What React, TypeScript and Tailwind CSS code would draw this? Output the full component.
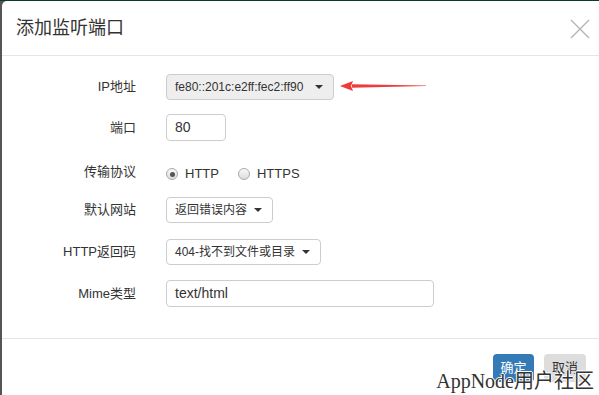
import type { ReactNode } from 'react';

const FONT = { fontFamily: '"Liberation Sans", "Noto Sans CJK SC", sans-serif' };

function Caret() {
  return (
    <span className="ml-auto inline-block h-0 w-0 shrink-0 border-x-[4px] border-t-[4px] border-x-transparent border-t-[#333]" />
  );
}

function Row({ label, mt, children }: { label: string; mt: string; children: ReactNode }) {
  return (
    <div className={`flex h-[27px] items-center ${mt}`}>
      <div className="w-[134px] shrink-0 text-right text-[13px] text-[#333]">{label}</div>
      <div className="ml-[30px] flex items-center">{children}</div>
    </div>
  );
}

function Select({ value, width, disabled }: { value: string; width: string; disabled?: boolean }) {
  return (
    <div
      className={`flex h-[26px] items-center whitespace-nowrap rounded-[4px] border border-[#ccc] pl-[8px] pr-[10px] text-[12px] text-[#333] ${width} ${
        disabled ? 'bg-[#eee]' : 'bg-white'
      }`}
    >
      <span>{value}</span>
      <Caret />
    </div>
  );
}

function Radio({ checked, label }: { checked?: boolean; label: string }) {
  return (
    <label className="flex items-center gap-[7px] text-[13px] text-[#333]">
      <span className="flex h-[12px] w-[12px] items-center justify-center rounded-full border border-[#aaa] bg-gradient-to-b from-[#fafafa] to-[#dcdcdc]">
        {checked && <span className="h-[5px] w-[5px] rounded-full bg-[#555]" />}
      </span>
      {label}
    </label>
  );
}

export default function App() {
  return (
    <div className="relative h-[395px] w-[599px] overflow-hidden border-t border-[#0b3b2b] bg-[#555]" style={FONT}>
      <div className="ml-[2px] flex h-[400px] w-[600px] flex-col rounded-tl-[5px] bg-white">
        {/* Header */}
        <div className="flex h-[55px] items-center justify-between border-b border-[#e5e5e5] pl-[14px] pr-[12px]">
          <h3 className="text-[18px] text-[#333]">添加监听端口</h3>
          <svg width="20" height="20" viewBox="0 0 20 20" className="mt-[1px]">
            <path d="M1 1 L19 19 M19 1 L1 19" stroke="#b5b5b5" strokeWidth="1.4" />
          </svg>
        </div>

        {/* Body */}
        <div className="h-[283px] border-b border-[#e5e5e5]">
          <Row label="IP地址" mt="mt-[17px]">
            <Select value="fe80::201c:e2ff:fec2:ff90" width="w-[168px]" disabled />
            <svg width="86" height="12" viewBox="0 0 86 12" className="ml-[6px] -mt-[2px]">
              <path d="M12 4.2 L86 5.6 L86 6 L12 7.8 Z" fill="#ee3b3b" />
              <path d="M0 6 L13 1 L11 6 L13 11 Z" fill="#ee3b3b" />
            </svg>
          </Row>
          <Row label="端口" mt="mt-[14px]">
            <div className="flex h-[27px] w-[60px] items-center rounded-[4px] border border-[#ccc] px-[8px] text-[14px] text-[#333]">
              80
            </div>
          </Row>
          <Row label="传输协议" mt="mt-[17px]">
            <div className="mt-[5px] flex items-center gap-[19px]">
              <Radio checked label="HTTP" />
              <Radio label="HTTPS" />
            </div>
          </Row>
          <Row label="默认网站" mt="mt-[11px]">
            <Select value="返回错误内容" width="w-[107px]" />
          </Row>
          <Row label="HTTP返回码" mt="mt-[15px]">
            <Select value="404-找不到文件或目录" width="w-[155px]" />
          </Row>
          <Row label="Mime类型" mt="mt-[15px]">
            <div className="flex h-[27px] w-[268px] items-center rounded-[4px] border border-[#ccc] px-[8px] text-[14px] text-[#333]">
              text/html
            </div>
          </Row>
        </div>

        {/* Footer */}
        <div className="flex justify-end gap-[10px] pr-[16px] pt-[15px]">
          <button type="button" className="h-[28px] w-[41px] rounded-[4px] bg-[#337ab7] text-[13px] text-white">
            确定
          </button>
          <button type="button" className="h-[28px] w-[42px] rounded-[4px] bg-[#ddd] text-[13px] text-[#333]">
            取消
          </button>
        </div>
      </div>

      {/* Watermark */}
      <div
        className="absolute bottom-[4px] right-[5px] text-[20px] leading-none text-[#333]"
        style={{
          fontFamily: '"Liberation Serif", "Noto Sans CJK SC", serif',
          textShadow: '1px 0 #fff, -1px 0 #fff, 0 1px #fff, 0 -1px #fff',
        }}
      >
        AppNode用户社区
      </div>
    </div>
  );
}
